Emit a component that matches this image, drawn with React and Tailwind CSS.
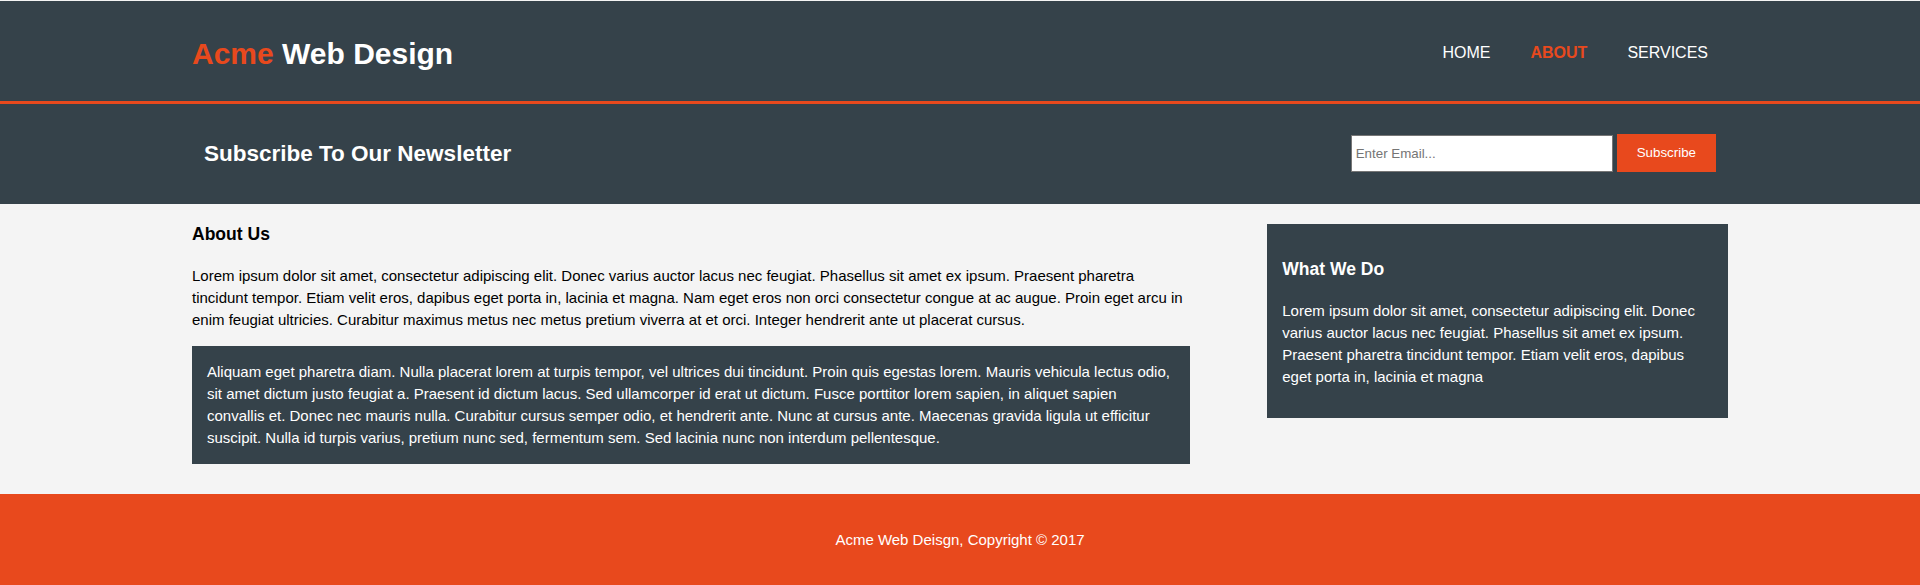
import React from 'react';

const App = () => {
  return (
    <div className="min-h-screen bg-[#f4f4f4] pt-px font-['Liberation_Sans',Arial,sans-serif] text-[15px] leading-[22px] text-black">
      <header className="h-[103px] bg-[#35424a] pt-[30px] text-white border-b-[3px] border-[#e8491d]">
        <div className="w-[80%] mx-auto flex justify-between items-start">
          <h1 className="m-0 text-[30px] font-bold leading-[45px]">
            <span className="text-[#e8491d]">Acme</span> Web Design
          </h1>
          <nav className="mt-[10px]">
            <ul className="flex">
              <li className="px-5">
                <a href="#" className="text-[16px] leading-6 uppercase text-white">Home</a>
              </li>
              <li className="px-5">
                <a href="#" className="text-[16px] leading-6 uppercase font-bold text-[#e8491d]">About</a>
              </li>
              <li className="px-5">
                <a href="#" className="text-[16px] leading-6 uppercase text-white">Services</a>
              </li>
            </ul>
          </nav>
        </div>
      </header>

      <section className="bg-[#35424a] text-white p-[15px]">
        <div className="w-[80%] mx-auto flex justify-between items-start">
          <h1 className="my-[18px] text-[22.5px] font-bold leading-[33.75px]">Subscribe To Our Newsletter</h1>
          <form className="mt-[15px] flex items-end gap-1">
            <input
              type="email"
              placeholder="Enter Email..."
              className="w-[262px] h-[37px] px-1 border border-[#767676] bg-white text-black text-[13.333px] font-['Liberation_Sans',Arial,sans-serif] placeholder:text-[#757575] outline-none"
            />
            <button
              type="submit"
              className="h-[38px] px-5 bg-[#e8491d] text-white text-[13.333px] font-['Liberation_Sans',Arial,sans-serif]"
            >
              Subscribe
            </button>
          </form>
        </div>
      </section>

      <section>
        <div className="w-[80%] mx-auto flex justify-between items-start">
          <article className="w-[65%]">
            <h1 className="my-[17.55px] text-[17.55px] font-bold leading-[26px]">About Us</h1>
            <p className="mb-[15px]">
              Lorem ipsum dolor sit amet, consectetur adipiscing elit. Donec varius auctor lacus nec feugiat. Phasellus sit amet ex ipsum. Praesent pharetra tincidunt tempor. Etiam velit eros, dapibus eget porta in, lacinia et magna. Nam eget eros non orci consectetur congue at ac augue. Proin eget arcu in enim feugiat ultricies. Curabitur maximus metus nec metus pretium viverra at et orci. Integer hendrerit ante ut placerat cursus.
            </p>
            <div className="bg-[#35424a] text-white p-[15px] mb-[10px]">
              Aliquam eget pharetra diam. Nulla placerat lorem at turpis tempor, vel ultrices dui tincidunt. Proin quis egestas lorem. Mauris vehicula lectus odio, sit amet dictum justo feugiat a. Praesent id dictum lacus. Sed ullamcorper id erat ut dictum. Fusce porttitor lorem sapien, in aliquet sapien convallis et. Donec nec mauris nulla. Curabitur cursus semper odio, et hendrerit ante. Nunc at cursus ante. Maecenas gravida ligula ut efficitur suscipit. Nulla id turpis varius, pretium nunc sed, fermentum sem. Sed lacinia nunc non interdum pellentesque.
            </div>
          </article>

          <aside className="w-[30%] mt-[10px]">
            <div className="bg-[#35424a] text-white px-[15px] pt-[15px] pb-[30px] mt-[10px]">
              <h1 className="my-[17.55px] text-[17.55px] font-bold leading-[26px]">What We Do</h1>
              <p>
                Lorem ipsum dolor sit amet, consectetur adipiscing elit. Donec varius auctor lacus nec feugiat. Phasellus sit amet ex ipsum. Praesent pharetra tincidunt tempor. Etiam velit eros, dapibus eget porta in, lacinia et magna
              </p>
            </div>
          </aside>
        </div>
      </section>

      <footer className="mt-[20px] bg-[#e8491d] text-white text-center p-[20px]">
        <p className="my-[15px]">Acme Web Deisgn, Copyright &copy; 2017</p>
      </footer>
    </div>
  );
};

export default App;
